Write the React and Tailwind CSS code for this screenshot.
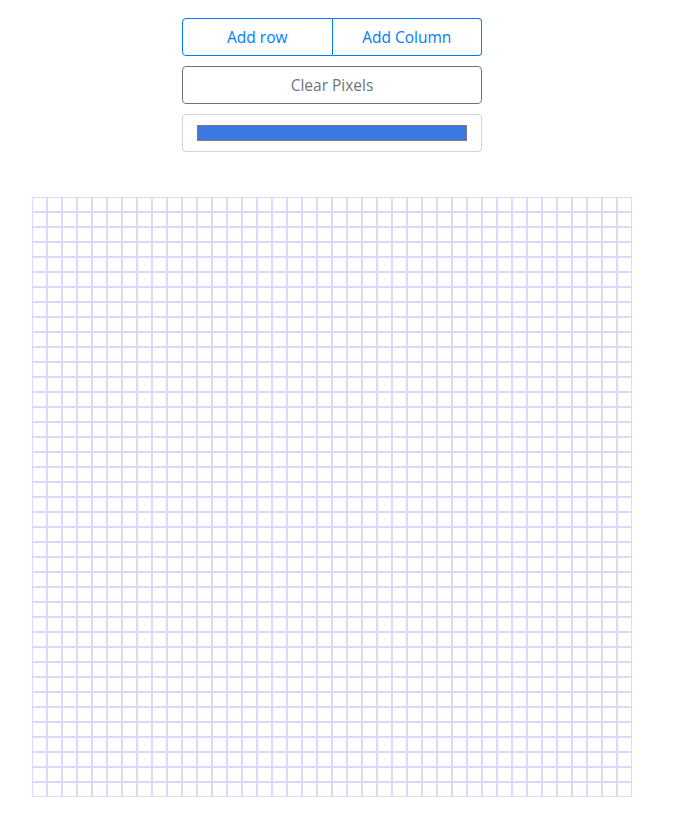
import React from "react";

const N = 40;

export default function App() {
  const cells = [];
  for (let i = 0; i < N * N; i++) {
    cells.push(<div key={i} className="w-[15px] h-[15px] border border-[#dcd8fc] bg-white" />);
  }
  return (
    <div className="bg-white min-h-[839px] w-[675px]" style={{ fontFamily: '"Open Sans", "Noto Sans", sans-serif' }}>
      <div className="flex flex-col items-start pt-[18px] pl-[182px]">
        <div className="flex w-[300px] h-[38px]">
          <button className="flex-1 h-full pt-[2px] border border-[#007bff] text-[#007bff] rounded-l-[4px] text-[15.5px] leading-none">Add row</button>
          <button className="flex-1 h-full pt-[2px] border border-l-0 border-[#007bff] text-[#007bff] rounded-r-[4px] text-[15.5px] leading-none">Add Column</button>
        </div>
        <button className="mt-[10px] w-[300px] h-[38px] pt-[2px] border border-[#6c757d] text-[#6c757d] rounded-[4px] text-[15.5px] leading-none">Clear Pixels</button>
        <div className="mt-[10px] w-[300px] h-[38px] border border-[#ced4da] rounded-[4px] flex items-center justify-center">
          <div className="w-[270px] h-[16px] bg-[#3b79e0] border border-[#777777]" />
        </div>
      </div>
      <div className="mt-[45px] ml-[32px] grid grid-cols-[repeat(40,15px)] w-[600px]">
        {cells}
      </div>
    </div>
  );
}
